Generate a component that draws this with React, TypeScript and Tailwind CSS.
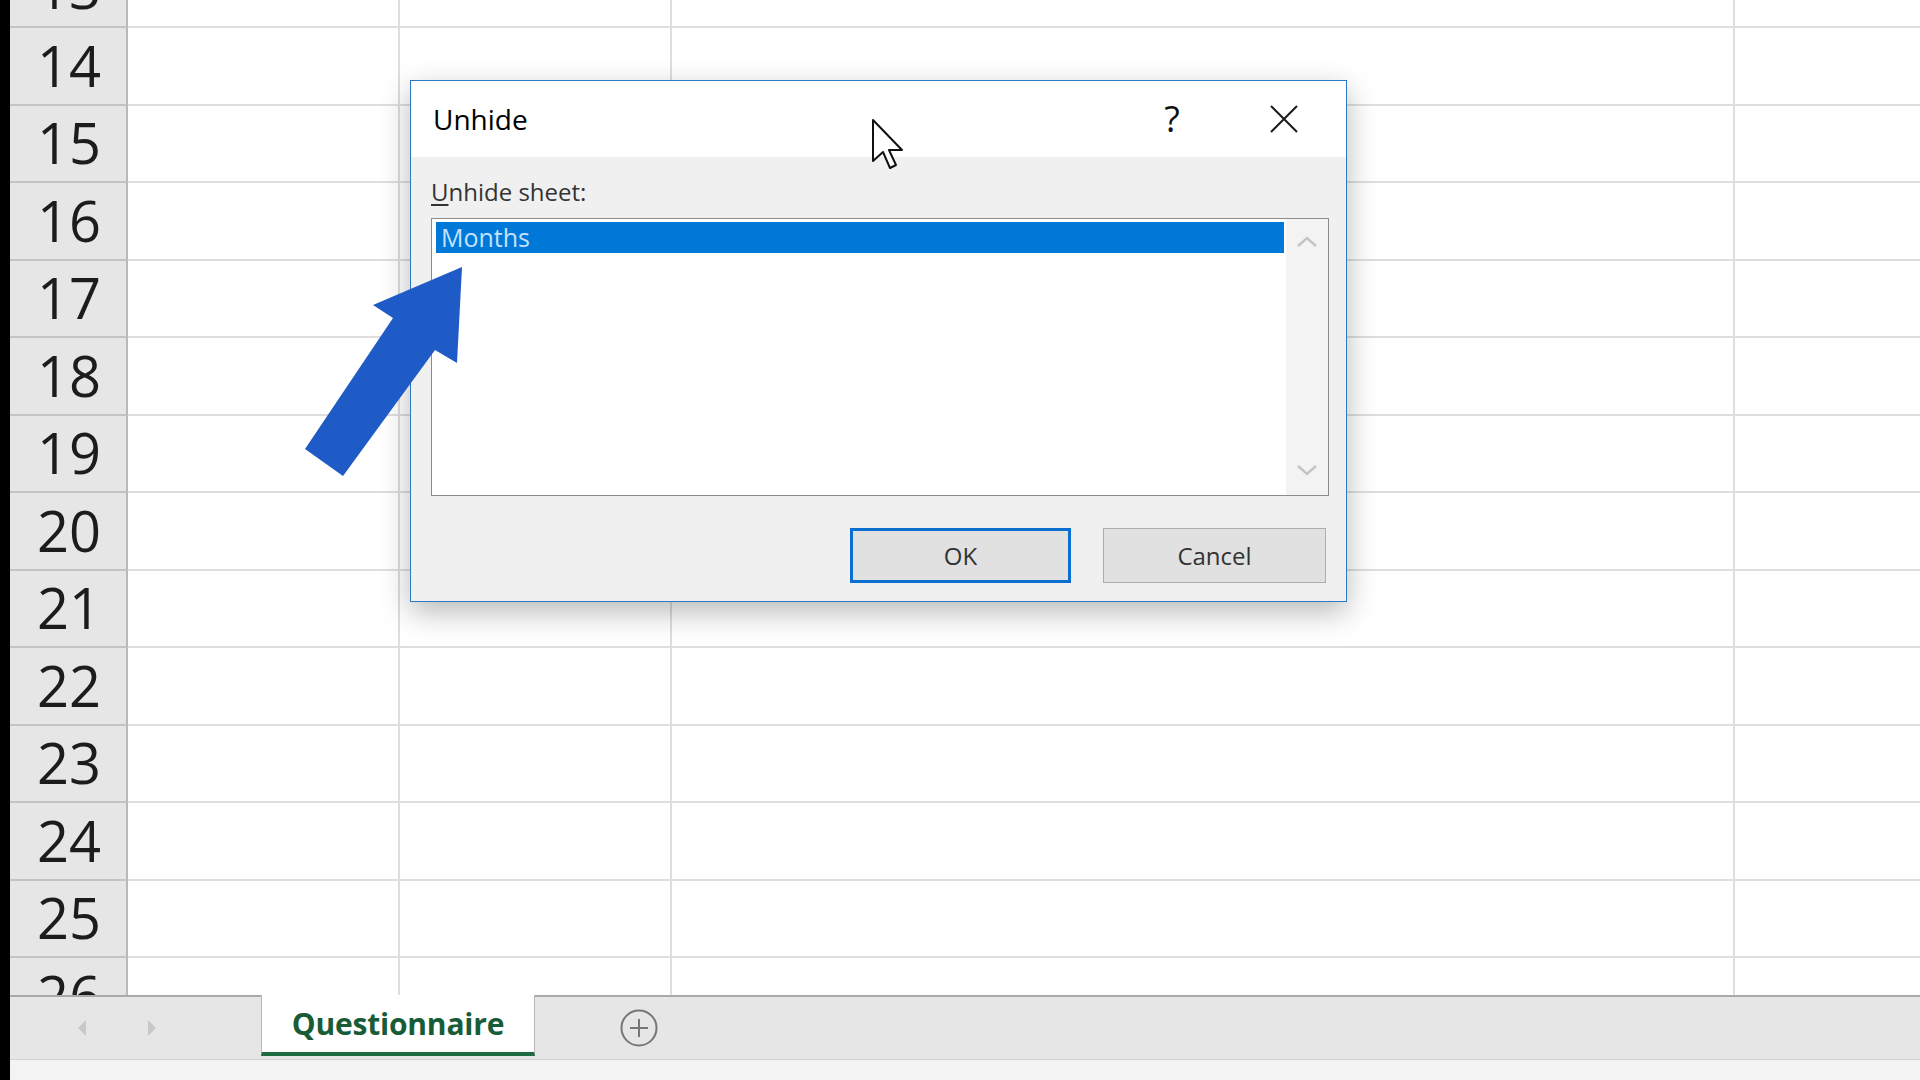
import React from 'react';

const ROWS = [13, 14, 15, 16, 17, 18, 19, 20, 21, 22, 23, 24, 25, 26];

function SheetRow({ n }: { n: number }) {
  return (
    <div className="flex h-[77.5px] shrink-0">
      <div className="w-[118px] shrink-0 flex items-center justify-center bg-[#e6e6e6] border-r-2 border-b-2 border-r-[#b9b9b9] border-b-[#c3c3c3] text-[56px] leading-none text-[#1c1c1c] font-['Open_Sans',sans-serif]">
        <span className="pb-[2px] pl-[2px]">{n}</span>
      </div>
      <div className="w-[272px] shrink-0 bg-white border-r-2 border-b-2 border-[#dedede]" />
      <div className="w-[272px] shrink-0 bg-white border-r-2 border-b-2 border-[#dedede]" />
      <div className="w-[1063px] shrink-0 bg-white border-r-2 border-b-2 border-[#dedede]" />
      <div className="flex-1 bg-white border-b-2 border-[#dedede]" />
    </div>
  );
}

function UnhideDialog() {
  return (
    <div className="absolute left-[410px] top-[80px] w-[937px] h-[522px] flex flex-col border border-[#2f78c4] bg-[#f0f0f0] shadow-[0_10px_28px_rgba(0,0,0,0.28)] font-['Open_Sans',sans-serif]">
      {/* title bar */}
      <div className="h-[76px] shrink-0 bg-white flex items-center pl-[22px] pr-[42px]">
        <span className="text-[28px] text-black">Unhide</span>
        <div className="flex-1" />
        <span className="w-[40px] text-center text-[36px] leading-none text-[#111]">?</span>
        <div className="w-[40px] h-[40px] ml-[72px] flex items-center justify-center">
          <svg width="28" height="28" viewBox="0 0 28 28">
            <path d="M1 1 L27 27 M27 1 L1 27" stroke="#1a1a1a" strokeWidth="2" fill="none" />
          </svg>
        </div>
      </div>

      {/* body */}
      <div className="flex-1 flex flex-col px-[20px] pt-[19px]">
        <div className="text-[24px] leading-[32px] text-[#333]">
          <span className="underline underline-offset-[3px]">U</span>nhide sheet:
        </div>
        <div className="mt-[10px] w-[898px] h-[278px] shrink-0 flex border border-[#8c8c8c] bg-white">
          <div className="flex-1 pt-[3px] pl-[4px] pr-[2px]">
            <div className="h-[31px] bg-[#0078d7] pl-[5px] text-[25px] leading-[31px] text-[#c4e2ff]">Months</div>
          </div>
          <div className="w-[42px] shrink-0 bg-[#f3f3f3] flex flex-col items-center justify-between pt-[17px] pb-[19px]">
            <svg width="22" height="12" viewBox="0 0 22 12">
              <path d="M2 10 L11 2 L20 10" stroke="#c4c4c4" strokeWidth="2.4" fill="none" />
            </svg>
            <svg width="22" height="12" viewBox="0 0 22 12">
              <path d="M2 2 L11 10 L20 2" stroke="#c4c4c4" strokeWidth="2.4" fill="none" />
            </svg>
          </div>
        </div>
        <div className="mt-[32px] flex justify-end gap-[32px]">
          <button className="w-[221px] h-[55px] border-[3px] border-[#0a6fd0] bg-[#e1e1e1] text-[24px] text-[#333]">OK</button>
          <button className="w-[223px] h-[55px] border border-[#adadad] bg-[#e1e1e1] text-[24px] text-[#333]">Cancel</button>
        </div>
      </div>
    </div>
  );
}

export default function App() {
  return (
    <div className="relative w-[1920px] h-[1080px] overflow-hidden flex bg-black">
      <div className="w-[10px] shrink-0 bg-black" />
      <div className="flex-1 flex flex-col">
        {/* sheet */}
        <div className="h-[995px] shrink-0 overflow-hidden flex flex-col">
          <div className="mt-[-49.5px] flex flex-col">
            {ROWS.map((n) => (
              <SheetRow key={n} n={n} />
            ))}
          </div>
        </div>

        {/* sheet tabs */}
        <div className="h-[64px] shrink-0 flex bg-[#e6e6e6] border-t-2 border-[#a9a9a9] font-['Open_Sans',sans-serif]">
          <div className="w-[251px] shrink-0 flex items-center pl-[67px] gap-[60px]">
            <svg width="10" height="16" viewBox="0 0 10 16">
              <path d="M9 0 L1 8 L9 16 Z" fill="#c8c8c8" />
            </svg>
            <svg width="10" height="16" viewBox="0 0 10 16">
              <path d="M1 0 L9 8 L1 16 Z" fill="#c8c8c8" />
            </svg>
          </div>
          <div className="w-[274px] shrink-0 mt-[-2px] mb-[3px] bg-white border-x border-[#b5b5b5] border-b-[4px] border-b-[#1e6b41] flex items-center justify-center">
            <span className="text-[30px] font-bold text-[#185c37] tracking-[-0.2px]">Questionnaire</span>
          </div>
          <div className="ml-[84px] flex items-center">
            <svg width="40" height="40" viewBox="0 0 40 40">
              <circle cx="20" cy="20" r="17.5" stroke="#767676" strokeWidth="2" fill="none" />
              <path d="M20 11 V29 M11 20 H29" stroke="#767676" strokeWidth="2" />
            </svg>
          </div>
        </div>

        {/* status strip */}
        <div className="flex-1 bg-[#f3f3f3] border-t border-[#d2d2d2]" />
      </div>

      <UnhideDialog />

      {/* annotation arrow + mouse pointer */}
      <svg className="absolute inset-0 pointer-events-none" width="1920" height="1080" viewBox="0 0 1920 1080">
        <polygon
          points="462,267 373,305 393,318 305,449 343,476 435,350 457,363"
          fill="#1e5bc6"
        />
        <polygon
          points="873,120 873,161 883,152 890,168 896,165 889,150 902,150"
          fill="#fff"
          stroke="#111"
          strokeWidth="2"
          strokeLinejoin="round"
        />
      </svg>
    </div>
  );
}
